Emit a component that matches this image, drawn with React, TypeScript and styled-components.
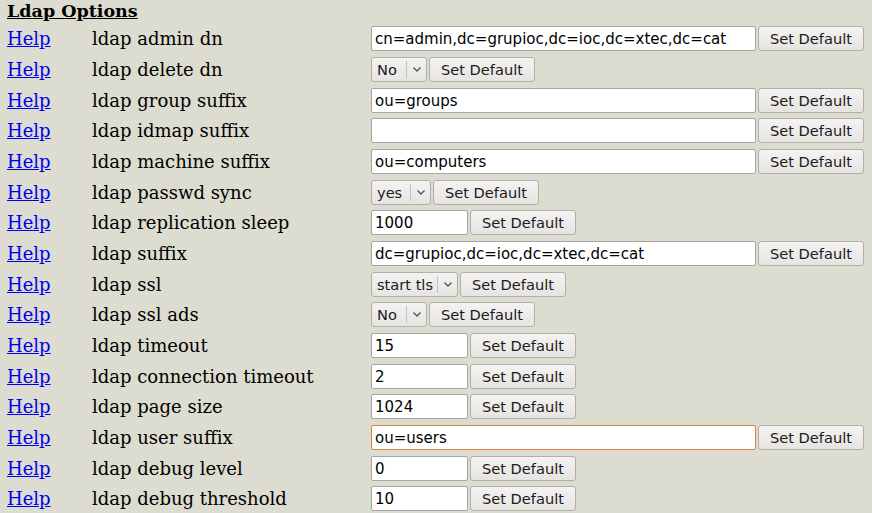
import React from "react";
import styled, { createGlobalStyle } from "styled-components";

const Global = createGlobalStyle`
  html, body { margin: 0; padding: 0; background: #dcdcd0; }
  body { font-family: "DejaVu Serif", serif; color: #000; }
`;

const Page = styled.div`
  padding: 1px 0 0 7px;
  width: 872px;
  height: 513px;
  overflow: hidden;
  box-sizing: border-box;
`;

const Heading = styled.div`
  font-family: "DejaVu Serif", serif;
  font-weight: bold;
  font-size: 17.5px;
  line-height: 21px;
  height: 22.67px;
  text-decoration: underline;
`;

const Row = styled.div`
  display: grid;
  grid-template-columns: 85px 279px auto;
  align-items: center;
  height: 30.67px;
`;

const HelpLink = styled.a`
  color: #0000ee;
  text-decoration: underline;
  font-size: 18px;
  font-family: "DejaVu Serif", serif;
`;

const Label = styled.span`
  font-size: 18px;
  font-family: "DejaVu Serif", serif;
`;

const Controls = styled.div`
  display: flex;
  align-items: center;
  gap: 2px;
`;

const TextInput = styled.div<{ $w: number; $focus?: boolean }>`
  width: ${(p) => p.$w}px;
  height: 25px;
  box-sizing: border-box;
  border: 1px solid ${(p) => (p.$focus ? "#d9823a" : "#a8a59f")};
  border-radius: 2px;
  background: #fff;
  padding: 0 3px;
  font-family: "DejaVu Sans", sans-serif;
  font-size: 15px;
  line-height: 24px;
  color: #000;
  white-space: nowrap;
  overflow: hidden;
`;

const Button = styled.div`
  height: 25px;
  box-sizing: border-box;
  border: 1px solid #b2afa9;
  border-radius: 3px;
  background: linear-gradient(#f4f3f2, #e6e4e1);
  padding: 0 11px;
  font-family: "DejaVu Sans", sans-serif;
  font-size: 14.6px;
  line-height: 23px;
  color: #1a1a1a;
  white-space: nowrap;
`;

const Select = styled.div<{ $w: number }>`
  width: ${(p) => p.$w}px;
  height: 25px;
  box-sizing: border-box;
  border: 1px solid #b2afa9;
  border-radius: 3px;
  background: linear-gradient(#f4f3f2, #e6e4e1);
  display: flex;
  align-items: stretch;
  font-family: "DejaVu Sans", sans-serif;
  font-size: 14.6px;
  color: #1a1a1a;
`;

const SelectText = styled.span`
  flex: 1;
  padding-left: 5px;
  line-height: 24px;
  white-space: nowrap;
`;

const SelectArrow = styled.span`
  width: 19px;
  display: flex;
  align-items: center;
  justify-content: center;
  margin: 3px 0;
  border-left: 1px solid #c4c1bb;
`;

const Chevron = () => (
  <svg width="10" height="7" viewBox="0 0 10 7">
    <path d="M1.5 1.5 L5 5 L8.5 1.5" fill="none" stroke="#555" strokeWidth="1.3" />
  </svg>
);

type Item =
  | { label: string; kind: "text"; value: string; w: number; focus?: boolean }
  | { label: string; kind: "select"; value: string; w: number };

const items: Item[] = [
  { label: "ldap admin dn", kind: "text", value: "cn=admin,dc=grupioc,dc=ioc,dc=xtec,dc=cat", w: 385 },
  { label: "ldap delete dn", kind: "select", value: "No", w: 56 },
  { label: "ldap group suffix", kind: "text", value: "ou=groups", w: 385 },
  { label: "ldap idmap suffix", kind: "text", value: "", w: 385 },
  { label: "ldap machine suffix", kind: "text", value: "ou=computers", w: 385 },
  { label: "ldap passwd sync", kind: "select", value: "yes", w: 60 },
  { label: "ldap replication sleep", kind: "text", value: "1000", w: 97 },
  { label: "ldap suffix", kind: "text", value: "dc=grupioc,dc=ioc,dc=xtec,dc=cat", w: 385 },
  { label: "ldap ssl", kind: "select", value: "start tls", w: 87 },
  { label: "ldap ssl ads", kind: "select", value: "No", w: 56 },
  { label: "ldap timeout", kind: "text", value: "15", w: 97 },
  { label: "ldap connection timeout", kind: "text", value: "2", w: 97 },
  { label: "ldap page size", kind: "text", value: "1024", w: 97 },
  { label: "ldap user suffix", kind: "text", value: "ou=users", w: 385, focus: true },
  { label: "ldap debug level", kind: "text", value: "0", w: 97 },
  { label: "ldap debug threshold", kind: "text", value: "10", w: 97 },
];

export default function App() {
  return (
    <>
      <Global />
      <Page>
        <Heading>Ldap Options</Heading>
        {items.map((it) => (
          <Row key={it.label}>
            <HelpLink href="#">Help</HelpLink>
            <Label>{it.label}</Label>
            <Controls>
              {it.kind === "text" ? (
                <TextInput $w={it.w} $focus={it.focus}>{it.value}</TextInput>
              ) : (
                <Select $w={it.w}>
                  <SelectText>{it.value}</SelectText>
                  <SelectArrow>
                    <Chevron />
                  </SelectArrow>
                </Select>
              )}
              <Button>Set Default</Button>
            </Controls>
          </Row>
        ))}
      </Page>
    </>
  );
}
